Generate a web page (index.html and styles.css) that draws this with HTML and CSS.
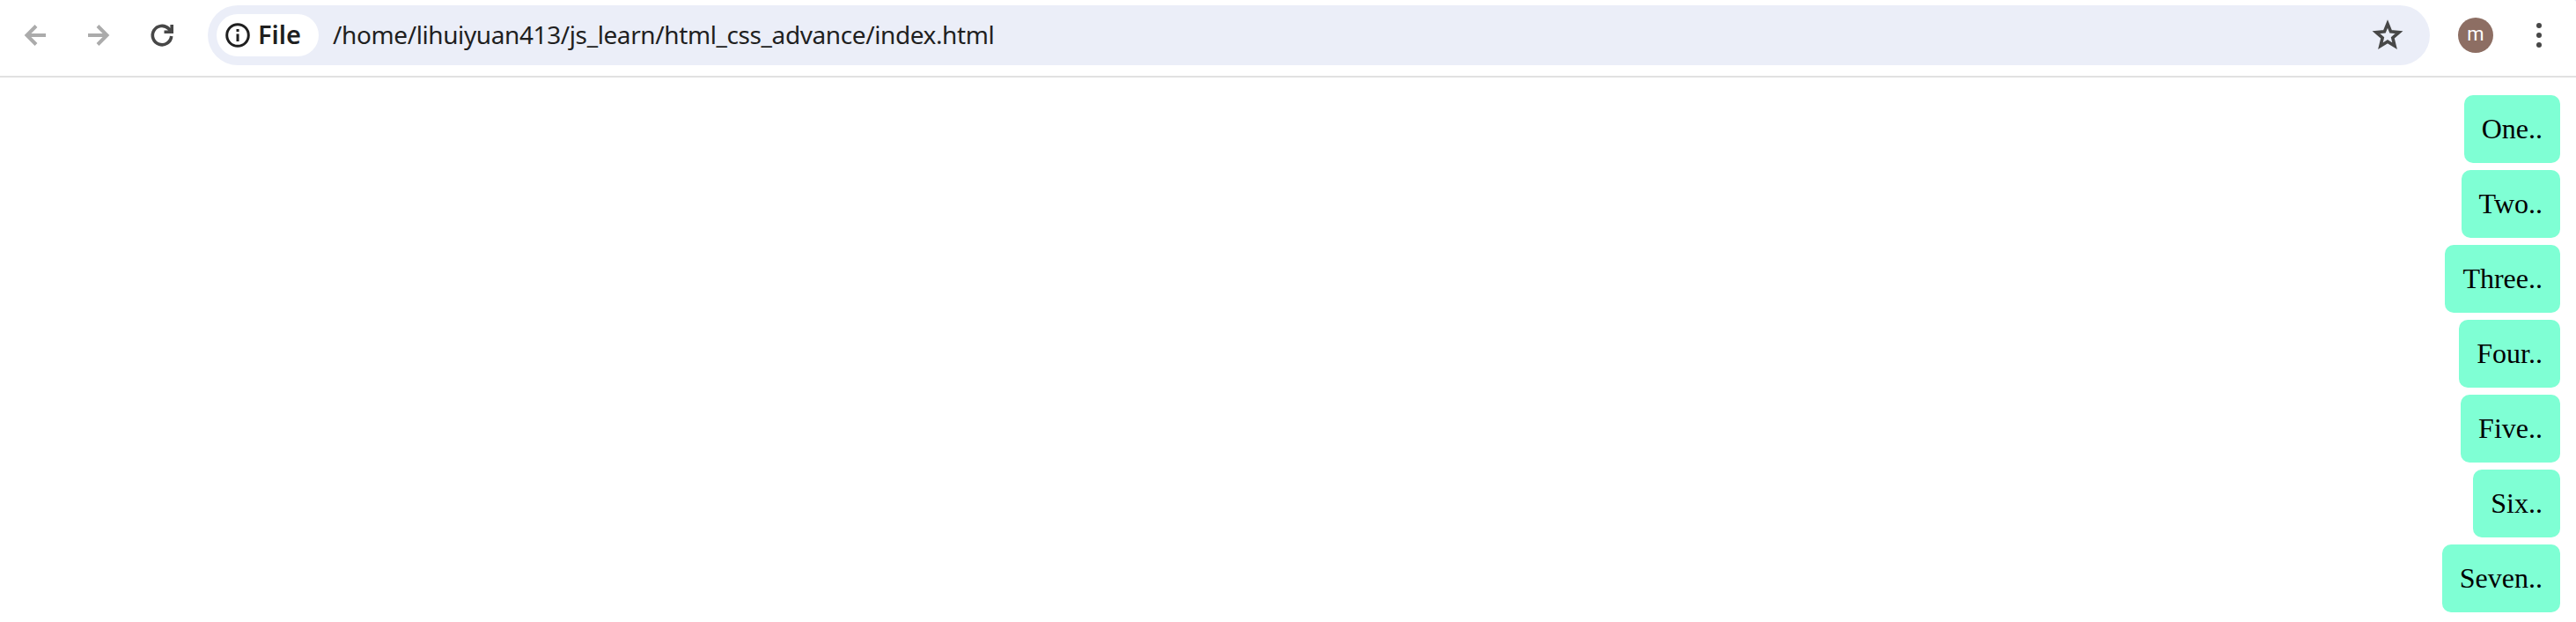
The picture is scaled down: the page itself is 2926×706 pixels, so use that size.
FILE: index.html
```html
<!DOCTYPE html>
<html lang="en">
<head>
<meta charset="utf-8">
<title>index.html</title>
<link rel="stylesheet" href="styles.css">
</head>
<body>
<div class="corner"></div>
<header class="toolbar">
  <nav class="nav">
    <svg class="icon muted" viewBox="0 0 40 40"><path d="M32 20H10M21 9.500L10.500 20L21 30.500"/></svg>
    <svg class="icon muted" viewBox="0 0 40 40"><path d="M8 20H30M19 9.500L29.500 20L19 30.500"/></svg>
    <svg class="icon reload" viewBox="0 0 40 40"><path d="M30.700 21A10.700 10.700 0 1 1 27.500 12.400L30 15M31.200 8V16.200H22.500"/></svg>
  </nav>
  <div class="omnibox">
    <div class="chip">
      <svg class="info" viewBox="0 0 28 28"><circle cx="14" cy="14" r="12.300"/><path d="M14 12.500V21M14 7V10"/></svg>
      <span class="chip-label">File</span>
    </div>
    <span class="url">/home/lihuiyuan413/js_learn/html_css_advance/index.html</span>
    <svg class="star" viewBox="0 0 44 44"><path d="M22 9L25.600 17.900L35 18.700L27.800 24.900L30.100 34.200L22 29.200L13.900 34.200L16.200 24.900L9 18.700L18.400 17.900Z"/></svg>
  </div>
  <div class="avatar">m</div>
  <svg class="menu" viewBox="0 0 8 28"><circle cx="4" cy="3" r="3"/><circle cx="4" cy="14" r="3"/><circle cx="4" cy="25" r="3"/></svg>
</header>
<main class="list">
  <div class="item">One..</div>
  <div class="item">Two..</div>
  <div class="item">Three..</div>
  <div class="item">Four..</div>
  <div class="item">Five..</div>
  <div class="item">Six..</div>
  <div class="item">Seven..</div>
</main>
</body>
</html>
```

FILE: styles.css
```css
* { box-sizing: border-box; }
body { margin: 0; height: 706px; overflow: hidden; background: #fff; }
.corner {
  position: absolute;
  top: 0;
  right: 0;
  width: 2px;
  height: 2px;
  background: linear-gradient(45deg, transparent 40%, #d3dcf8);
}
.toolbar {
  display: flex;
  align-items: center;
  height: 88px;
  padding: 0 38px 6px 20px;
  border-bottom: 2px solid #e1e1e1;
}
.nav { display: flex; gap: 32px; width: 216px; }
.icon { flex: none; width: 40px; height: 40px; fill: none; stroke: #474747; stroke-width: 4; }
.muted { stroke: #ababab; }
.reload { stroke-width: 3.600; }
.omnibox {
  display: flex;
  align-items: center;
  width: 2524px;
  height: 68px;
  padding: 0 26px 0 10px;
  border-radius: 34px;
  background: #ebeef8;
  color: #1f1f1f;
}
.chip {
  display: flex;
  align-items: center;
  width: 116px;
  height: 48px;
  padding-left: 10px;
  border-radius: 24px;
  background: #fff;
}
.info { width: 28px; height: 28px; fill: none; stroke: #1f1f1f; stroke-width: 3; }
.chip-label {
  margin-left: 9px;
  padding-bottom: 2px;
  font: 600 29px/38px "Noto Sans", sans-serif;
}
.url {
  margin-left: 16px;
  padding-bottom: 2px;
  font: 28px/38px "Noto Sans", sans-serif;
  letter-spacing: -0.4px;
  white-space: nowrap;
}
.star { width: 44px; height: 44px; margin-left: auto; fill: none; stroke: #474747; stroke-width: 3.600; }
.avatar {
  width: 40px;
  height: 40px;
  margin-left: 32px;
  border-radius: 50%;
  background: #8d6e63;
  color: #fff;
  font: 22px/38px Roboto, sans-serif;
  text-align: center;
}
.menu { width: 8px; height: 28px; margin-left: auto; fill: #474747; }
.list {
  display: flex;
  flex-direction: column;
  align-items: flex-end;
  gap: 8px;
  padding: 20px 18px 0;
}
.item {
  height: 77px;
  padding: 20px;
  border-radius: 10px;
  background: #7fffd4;
  color: #000;
  font: 32px/37px "Liberation Serif", serif;
}
```
